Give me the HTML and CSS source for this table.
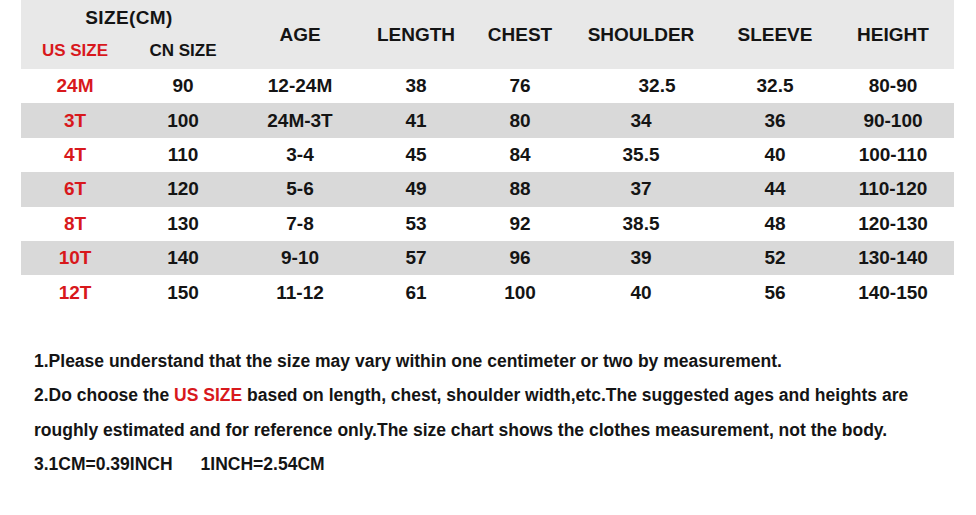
FILE: index.html
```html
<!DOCTYPE html>
<html>
<head>
<meta charset="utf-8">
<link rel="stylesheet" href="styles.css">
</head>
<body>
<div class="page">
  <div class="chart">
    <div class="head">
      <div class="size-group">
        <div class="size-title">SIZE(CM)</div>
        <div class="size-sub">
          <span class="sub red">US SIZE</span>
          <span class="sub">CN SIZE</span>
        </div>
      </div>
      <div class="hcell">AGE</div>
      <div class="hcell">LENGTH</div>
      <div class="hcell">CHEST</div>
      <div class="hcell">SHOULDER</div>
      <div class="hcell">SLEEVE</div>
      <div class="hcell last">HEIGHT</div>
    </div>
    <div class="row"><span class="red">24M</span><span>90</span><span>12-24M</span><span>38</span><span>76</span><span class="shift">32.5</span><span>32.5</span><span class="last">80-90</span></div>
    <div class="row alt"><span class="red">3T</span><span>100</span><span>24M-3T</span><span>41</span><span>80</span><span>34</span><span>36</span><span class="last">90-100</span></div>
    <div class="row"><span class="red">4T</span><span>110</span><span>3-4</span><span>45</span><span>84</span><span>35.5</span><span>40</span><span class="last">100-110</span></div>
    <div class="row alt"><span class="red">6T</span><span>120</span><span>5-6</span><span>49</span><span>88</span><span>37</span><span>44</span><span class="last">110-120</span></div>
    <div class="row"><span class="red">8T</span><span>130</span><span>7-8</span><span>53</span><span>92</span><span>38.5</span><span>48</span><span class="last">120-130</span></div>
    <div class="row alt"><span class="red">10T</span><span>140</span><span>9-10</span><span>57</span><span>96</span><span>39</span><span>52</span><span class="last">130-140</span></div>
    <div class="row"><span class="red">12T</span><span>150</span><span>11-12</span><span>61</span><span>100</span><span>40</span><span>56</span><span class="last">140-150</span></div>
  </div>
  <div class="notes">
    <p>1.Please understand that the size may vary within one centimeter or two by measurement.</p>
    <p>2.Do choose the <span class="red">US SIZE</span> based on length, chest, shoulder width,etc.The suggested ages and heights are</p>
    <p>roughly estimated and for reference only.The size chart shows the clothes measurement, not the body.</p>
    <p><span>3.1CM=0.39INCH</span><span class="gap">1INCH=2.54CM</span></p>
  </div>
</div>
</body>
</html>
```

FILE: styles.css
```css
html, body {
  margin: 0;
  padding: 0;
  background: #ffffff;
}

.page {
  width: 976px;
  height: 515px;
  font-family: "Liberation Sans", Arial, sans-serif;
  font-weight: bold;
  color: #141414;
}

.chart {
  margin-left: 21px;
  width: 933px;
}

.head,
.row {
  display: grid;
  grid-template-columns: 108px 108px 126px 106px 102px 140px 128px 115px;
  align-items: center;
}

.head {
  height: 69px;
  background: #e8e8e8;
}

.size-group {
  grid-column: 1 / 3;
  display: flex;
  flex-direction: column;
  height: 69px;
}

.size-title {
  font-size: 19px;
  letter-spacing: 0.4px;
  text-align: center;
  height: 32px;
  line-height: 36px;
}

.size-sub {
  display: grid;
  grid-template-columns: 108px 108px;
  height: 37px;
  line-height: 38px;
}

.sub {
  font-size: 17px;
  text-align: center;
}

.hcell {
  font-size: 19px;
  text-align: center;
}

.last {
  padding-right: 7px;
}

.row {
  height: 34.4px;
  font-size: 19px;
  text-align: center;
}

.row > span {
  text-align: center;
}

.row .shift {
  padding-left: 32px;
}

.alt {
  background: #d9d9d9;
}

.red {
  color: #d8181c;
}

.notes {
  margin-top: 34px;
  margin-left: 34px;
  font-size: 17.5px;
}

.notes p {
  margin: 0;
  height: 34.5px;
  line-height: 34.5px;
  white-space: nowrap;
}

.gap {
  margin-left: 28px;
}
```
